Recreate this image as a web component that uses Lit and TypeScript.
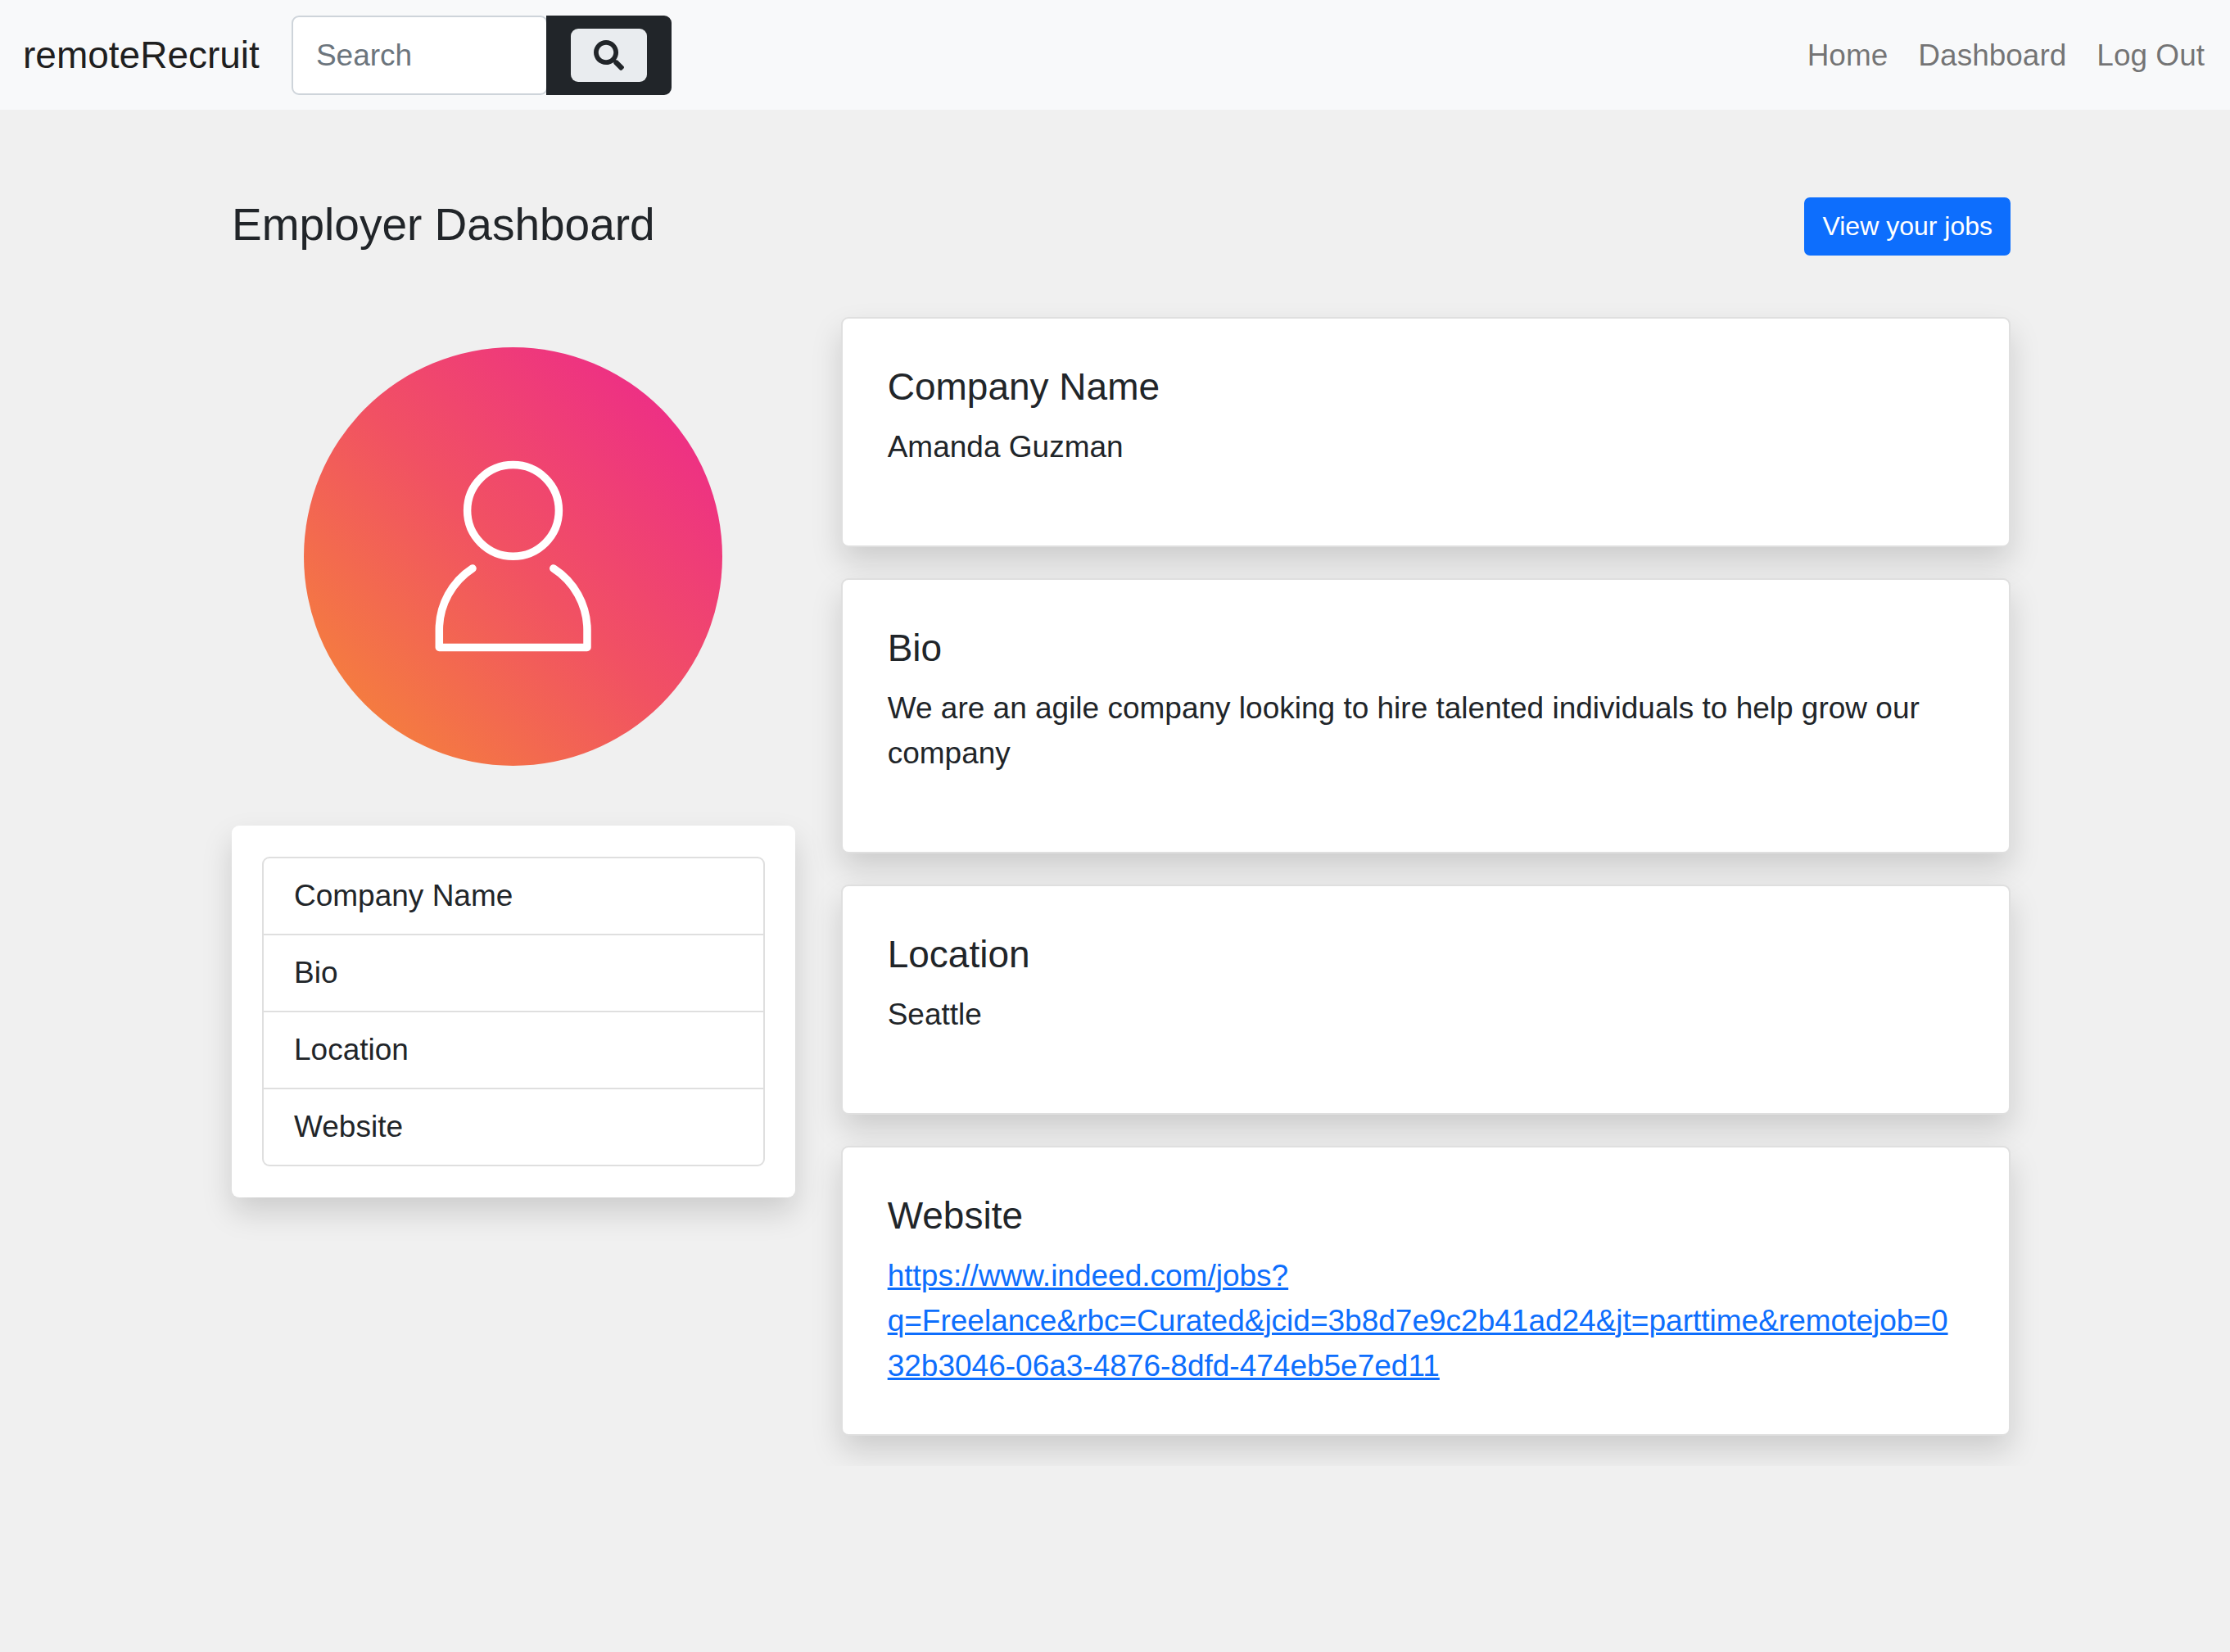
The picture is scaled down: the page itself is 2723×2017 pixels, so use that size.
import { LitElement, html, css, nothing } from "lit";
import { customElement, property } from "lit/decorators.js";

interface ProfileSection {
  id: string;
  title: string;
  text: string;
  link?: boolean;
}

const SECTIONS: ProfileSection[] = [
  { id: "company-name", title: "Company Name", text: "Amanda Guzman" },
  {
    id: "bio",
    title: "Bio",
    text: "We are an agile company looking to hire talented individuals to help grow our company",
  },
  { id: "location", title: "Location", text: "Seattle" },
  {
    id: "website",
    title: "Website",
    text: "https://www.indeed.com/jobs?q=Freelance&rbc=Curated&jcid=3b8d7e9c2b41ad24&jt=parttime&remotejob=032b3046-06a3-4876-8dfd-474eb5e7ed11",
    link: true,
  },
];

@customElement("site-navbar")
export class SiteNavbar extends LitElement {
  static styles = css`
    :host {
      display: block;
      background: #f8f9fa;
    }
    .bar {
      display: flex;
      align-items: center;
      justify-content: space-between;
      padding: 19px 31px 18px 28px;
    }
    .left {
      display: flex;
      align-items: center;
      gap: 39px;
    }
    .brand {
      font-size: 46px;
      line-height: 69px;
      color: rgba(0, 0, 0, 0.9);
      text-decoration: none;
    }
    .search {
      display: flex;
      align-items: stretch;
      height: 97px;
    }
    .field {
      box-sizing: border-box;
      width: 313px;
      margin: 0 -2px 0 0;
      padding: 0 28px;
      border: 2px solid #ced4da;
      border-radius: 9px;
      background: #fff;
      color: #212529;
      font: inherit;
      outline: none;
    }
    .field::placeholder {
      color: #6c757d;
      opacity: 1;
    }
    .addon {
      display: flex;
      align-items: center;
      padding: 0 30px;
      background: #212529;
      border-radius: 0 9px 9px 0;
    }
    .submit {
      display: flex;
      align-items: center;
      justify-content: center;
      padding: 14px 28px;
      border: 0;
      border-radius: 9px;
      background: #e9ecef;
      color: #212529;
      cursor: pointer;
    }
    .icon {
      display: block;
      width: 37px;
      height: 37px;
    }
    .links {
      display: flex;
      gap: 37px;
      margin: 0;
      padding: 0;
      list-style: none;
    }
    .link {
      color: rgba(0, 0, 0, 0.55);
      text-decoration: none;
    }
  `;

  render() {
    return html`
      <nav class="bar">
        <div class="left">
          <a class="brand" href="#">remoteRecruit</a>
          <form class="search" @submit=${(e: Event) => e.preventDefault()}>
            <input class="field" type="search" placeholder="Search" aria-label="Search" />
            <span class="addon">
              <button class="submit" type="submit" aria-label="Search">
                <svg class="icon" viewBox="0 0 512 512" fill="currentColor" aria-hidden="true">
                  <path
                    d="M505 442.7L405.3 343c-4.5-4.5-10.6-7-17-7H372c27.6-35.3 44-79.7 44-128C416 93.1 322.9 0 208 0S0 93.1 0 208s93.1 208 208 208c48.3 0 92.7-16.4 128-44v16.3c0 6.4 2.5 12.5 7 17l99.7 99.7c9.4 9.4 24.6 9.4 33.9 0l28.3-28.3c9.4-9.4 9.4-24.6.1-34zM208 336c-70.7 0-128-57.2-128-128 0-70.7 57.2-128 128-128 70.7 0 128 57.2 128 128 0 70.7-57.2 128-128 128z"
                  />
                </svg>
              </button>
            </span>
          </form>
        </div>
        <ul class="links">
          <li><a class="link" href="#">Home</a></li>
          <li><a class="link" href="#">Dashboard</a></li>
          <li><a class="link" href="#">Log Out</a></li>
        </ul>
      </nav>
    `;
  }
}

@customElement("user-avatar")
export class UserAvatar extends LitElement {
  static styles = css`
    :host {
      display: block;
    }
    .avatar {
      display: block;
      width: 100%;
    }
  `;

  render() {
    return html`
      <svg class="avatar" viewBox="0 0 511 511" role="img" aria-label="Profile picture">
        <defs>
          <linearGradient id="sunset" gradientUnits="userSpaceOnUse" x1="40" y1="471" x2="471" y2="40">
            <stop offset="0" stop-color="#f5833a" />
            <stop offset="0.5" stop-color="#f15163" />
            <stop offset="1" stop-color="#ed2a8a" />
          </linearGradient>
        </defs>
        <circle cx="255.5" cy="255.5" r="255.5" fill="url(#sunset)" />
        <g fill="none" stroke="#fff" stroke-width="9.5" stroke-linecap="round" stroke-linejoin="round">
          <circle cx="255.5" cy="199.3" r="55.9" />
          <path d="M206 270A89.5 89.5 0 0 0 165.3 344V366.5H346V344A89.5 89.5 0 0 0 304.8 270" />
        </g>
      </svg>
    `;
  }
}

@customElement("profile-card")
export class ProfileCard extends LitElement {
  @property({ attribute: false }) section!: ProfileSection;

  static styles = css`
    :host {
      display: block;
      padding: 56px 55px;
      border: 2px solid #dfdfdf;
      border-radius: 9px;
      background: #fff;
      box-shadow: 0 18px 37px rgba(0, 0, 0, 0.15);
    }
    .title {
      margin: 0 0 18px;
      font-size: 46px;
      font-weight: 400;
      line-height: 55px;
    }
    .text {
      margin: 0 0 37px;
    }
    .url {
      display: block;
      color: #0d6efd;
      overflow-wrap: anywhere;
      text-decoration-thickness: 3px;
    }
  `;

  render() {
    const { title, text, link } = this.section;
    return html`
      <h2 class="title">${title}</h2>
      ${link ? html`<a class="url" href=${text}>${text}</a>` : nothing}
      ${link ? nothing : html`<p class="text">${text}</p>`}
    `;
  }
}

@customElement("app-root")
export class AppRoot extends LitElement {
  static styles = css`
    :host {
      display: block;
      min-height: 100vh;
      background: #f0f0f0;
      color: #212529;
      font-family: Arial, "Liberation Sans", sans-serif;
      font-size: 37px;
      line-height: 55px;
    }
    .page {
      padding: 107px 268px 107px 283px;
    }
    .head {
      display: flex;
      align-items: flex-start;
      justify-content: space-between;
      margin-bottom: 75px;
    }
    .heading {
      margin: 0;
      font-size: 55px;
      font-weight: 400;
      line-height: 66px;
    }
    .jobs {
      padding: 9px 20px;
      border: 2px solid #0d6efd;
      border-radius: 7px;
      background: #0d6efd;
      color: #fff;
      font-family: inherit;
      font-size: 32px;
      line-height: 49px;
      cursor: pointer;
    }
    .columns {
      display: grid;
      grid-template-columns: minmax(0, 13fr) minmax(0, 27fr);
      gap: 56px;
      align-items: start;
    }
    .side {
      display: grid;
      gap: 73px;
      padding-top: 37px;
    }
    .portrait {
      width: 511px;
      max-width: 100%;
      justify-self: center;
    }
    .menu {
      padding: 38px 37px;
      border-radius: 9px;
      background: #fff;
      box-shadow: 0 18px 37px rgba(0, 0, 0, 0.15);
    }
    .list {
      margin: 0;
      padding: 0;
      border: 2px solid #dfdfdf;
      border-radius: 9px;
      list-style: none;
    }
    .item + .item {
      border-top: 2px solid #dfdfdf;
    }
    .item-link {
      display: block;
      padding: 18px 37px 19px;
      color: inherit;
      text-decoration: none;
    }
    .cards {
      display: grid;
      gap: 38px;
      padding-bottom: 37px;
      clip-path: inset(-60px -60px 0 -60px);
    }
  `;

  render() {
    return html`
      <site-navbar></site-navbar>
      <main class="page">
        <header class="head">
          <h1 class="heading">Employer Dashboard</h1>
          <button class="jobs" type="button">View your jobs</button>
        </header>
        <div class="columns">
          <aside class="side">
            <user-avatar class="portrait"></user-avatar>
            <nav class="menu" aria-label="Profile sections">
              <ul class="list">
                ${SECTIONS.map(
                  (s) => html`<li class="item"><a class="item-link" href="#${s.id}">${s.title}</a></li>`
                )}
              </ul>
            </nav>
          </aside>
          <div class="cards">
            ${SECTIONS.map((s) => html`<profile-card id=${s.id} .section=${s}></profile-card>`)}
          </div>
        </div>
      </main>
    `;
  }
}
